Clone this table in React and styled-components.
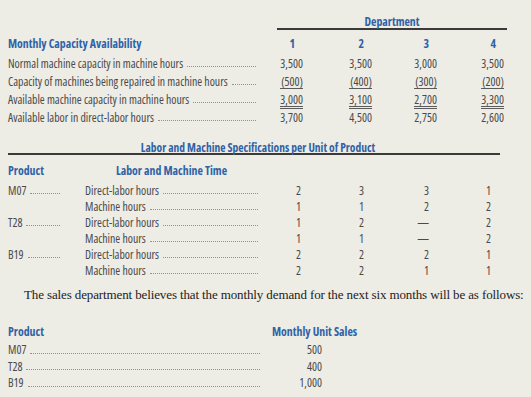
import React from "react";
import styled, { createGlobalStyle } from "styled-components";

const GlobalStyle = createGlobalStyle`
  html, body {
    margin: 0;
    padding: 0;
    background: #edece5;
  }
  body {
    font-family: "Open Sans", "Roboto", sans-serif;
    font-stretch: 75%;
    color: #4a4a4a;
  }
`;

const Page = styled.div`
  width: 531px;
  height: 397px;
  padding-top: 14px;
  box-sizing: border-box;
  overflow: hidden;
`;

const Grid = styled.div`
  display: grid;
  grid-template-columns: ${(p) => p.$cols};
  margin-left: 8px;
  font-size: 11.8px;
`;

const Heading = styled.div`
  color: #2f62a7;
  font-weight: bold;
  white-space: nowrap;
  height: ${(p) => p.$h || 18}px;
  line-height: ${(p) => p.$h || 18}px;
  text-align: ${(p) => p.$align || "left"};
  padding-right: ${(p) => p.$pr || 0}px;
`;

const Department = styled(Heading)`
  grid-column: 2 / 6;
  height: 14px;
  line-height: 14px;
  text-align: center;
  border-bottom: 2px solid #3a3a3a;
  margin: 0 -3px 3px -2px;
`;

const LabelCell = styled.div`
  display: flex;
  align-items: flex-end;
  height: ${(p) => p.$h}px;
  line-height: ${(p) => p.$h}px;
  padding-right: ${(p) => p.$pr || 0}px;
  white-space: nowrap;
`;

const Leader = styled.span`
  flex: 1;
  margin: 0 0 ${(p) => p.$mb}px 4px;
  border-bottom: 1px dotted #93938e;
`;

const ValueCell = styled.div`
  height: ${(p) => p.$h}px;
  line-height: ${(p) => p.$h}px;
  text-align: right;
  white-space: nowrap;
`;

const Figure = styled.span`
  display: inline-block;
  min-width: 23px;
  line-height: 14px;
  text-align: right;
  ${(p) => p.$rule === "single" && "border-bottom: 1px solid #5a5a5a;"}
  ${(p) => p.$rule === "double" && "border-bottom: 3px double #5a5a5a;"}
`;

const SpecTitle = styled.div`
  width: 492px;
  margin: 15px 0 3px 8px;
  padding-left: 8px;
  box-sizing: border-box;
  height: 14px;
  line-height: 14px;
  color: #2f62a7;
  font-weight: bold;
  font-size: 11.5px;
  text-align: center;
  border-bottom: 2px solid #3a3a3a;
`;

const Sentence = styled.p`
  margin: 8px 0 17px 24px;
  font-family: "Liberation Serif", serif;
  font-stretch: normal;
  font-size: 13px;
  letter-spacing: -0.12px;
  line-height: 18px;
  color: #222;
  white-space: nowrap;
`;

const capacity = [
  { label: "Normal machine capacity in machine hours", values: ["3,500", "3,500", "3,000", "3,500"] },
  { label: "Capacity of machines being repaired in machine hours", values: ["(500)", "(400)", "(300)", "(200)"], rule: "single" },
  { label: "Available machine capacity in machine hours", values: ["3,000", "3,100", "2,700", "3,300"], rule: "double" },
  { label: "Available labor in direct-labor hours", values: ["3,700", "4,500", "2,750", "2,600"] },
];

const specs = [
  { product: "M07", time: "Direct-labor hours", values: ["2", "3", "3", "1"] },
  { product: "", time: "Machine hours", values: ["1", "1", "2", "2"] },
  { product: "T28", time: "Direct-labor hours", values: ["1", "2", "—", "2"] },
  { product: "", time: "Machine hours", values: ["1", "1", "—", "2"] },
  { product: "B19", time: "Direct-labor hours", values: ["2", "2", "2", "1"] },
  { product: "", time: "Machine hours", values: ["2", "2", "1", "1"] },
];

const sales = [
  { product: "M07", units: "500" },
  { product: "T28", units: "400" },
  { product: "B19", units: "1,000" },
];

export default function App() {
  return (
    <Page>
      <GlobalStyle />

      <Grid $cols="271px 24px 69px 65px 67px">
        <div />
        <Department>Department</Department>

        <Heading $h={21}>Monthly Capacity Availability</Heading>
        {["1", "2", "3", "4"].map((n) => (
          <Heading key={n} $h={21} $align="right" $pr={8}>{n}</Heading>
        ))}

        {capacity.map((row) => (
          <React.Fragment key={row.label}>
            <LabelCell $h={18} $pr={23}>
              {row.label}
              <Leader $mb={5} />
            </LabelCell>
            {row.values.map((v, i) => (
              <ValueCell key={i} $h={18}>
                <Figure $rule={row.rule}>{v}</Figure>
              </ValueCell>
            ))}
          </React.Fragment>
        ))}
      </Grid>

      <SpecTitle>Labor and Machine Specifications per Unit of Product</SpecTitle>

      <Grid $cols="77px 173px 43px 63px 65px 62px">
        <Heading $h={24}>Product</Heading>
        <Heading $h={24} $align="center">Labor and Machine Time</Heading>
        <div />
        <div />
        <div />
        <div />

        {specs.map((row, r) => (
          <React.Fragment key={r}>
            {row.product ? (
              <LabelCell $h={16} $pr={25}>
                {row.product}
                <Leader $mb={4} />
              </LabelCell>
            ) : (
              <div />
            )}
            <LabelCell $h={16}>
              {row.time}
              <Leader $mb={4} />
            </LabelCell>
            {row.values.map((v, i) => (
              <ValueCell key={i} $h={16}>{v}</ValueCell>
            ))}
          </React.Fragment>
        ))}
      </Grid>

      <Sentence>
        The sales department believes that the monthly demand for the next six months will be as follows:
      </Sentence>

      <Grid $cols="264px 50px">
        <Heading $h={20}>Product</Heading>
        <Heading $h={20}>Monthly Unit Sales</Heading>
        {sales.map((row) => (
          <React.Fragment key={row.product}>
            <LabelCell $h={16.5} $pr={12}>
              {row.product}
              <Leader $mb={4} />
            </LabelCell>
            <ValueCell $h={16.5}>{row.units}</ValueCell>
          </React.Fragment>
        ))}
      </Grid>
    </Page>
  );
}
